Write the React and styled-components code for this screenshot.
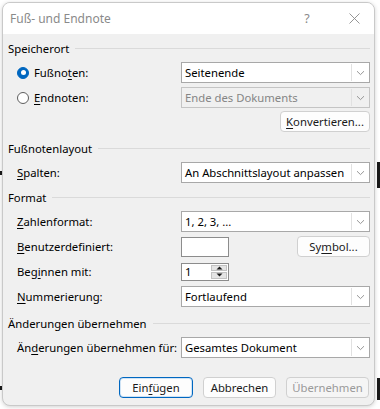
import React from 'react';
import styled, { createGlobalStyle } from 'styled-components';

const GlobalStyle = createGlobalStyle`
  html, body {
    margin: 0;
    padding: 0;
    background: #ffffff;
  }
  body {
    font-family: "Segoe UI", "Noto Sans", "Open Sans", sans-serif;
    font-size: 11.3px;
    color: #000;
  }
`;

const Page = styled.div`
  position: relative;
  width: 380px;
  height: 409px;
  overflow: hidden;
  padding: 2px 0 0 2px;
  box-sizing: border-box;
`;

const DocMark = styled.div`
  position: absolute;
  background: #1a1a1a;
`;

const Dialog = styled.div`
  position: relative;
  width: 373px;
  height: 404px;
  box-sizing: border-box;
  border: 1px solid #c9c9c9;
  border-radius: 8px;
  background: #f0f0f0;
  box-shadow: 0 1px 4px rgba(0, 0, 0, 0.18);
  overflow: hidden;
  display: flex;
  flex-direction: column;
`;

const TitleBar = styled.div`
  height: 31px;
  background: #ffffff;
  display: flex;
  align-items: center;
  gap: 7px;
  padding-left: 7px;
  color: #8a8a8a;
  font-size: 12px;
`;

const TitleText = styled.div`
  flex: 1;
`;

const TitleButton = styled.div`
  width: 40px;
  display: flex;
  justify-content: center;
  color: #8a8a8a;
  font-size: 12.5px;
`;

const Body = styled.div`
  flex: 1;
  display: flex;
  flex-direction: column;
  padding: 4px 4px 0 5px;
`;

const Heading = styled.div`
  height: 20px;
  display: flex;
  align-items: center;
  gap: 6px;
  margin-top: ${p => p.$mt || 0}px;
  &::after {
    content: '';
    flex: 1;
    border-top: 1px solid #dadada;
    margin-top: 1px;
  }
`;

const Row = styled.div`
  display: grid;
  grid-template-columns: 9px 164px 189px;
  align-items: center;
  height: 21px;
  margin-top: ${p => p.$mt ?? 4}px;
`;

const Label = styled.div`
  grid-column: 2;
  display: flex;
  align-items: center;
  white-space: nowrap;
  u {
    text-underline-offset: 2px;
  }
`;

const Radio = styled.span`
  width: 12px;
  height: 12px;
  box-sizing: border-box;
  border-radius: 50%;
  margin: 0 5px 0 0;
  background: ${p => (p.$checked ? '#0067c0' : '#fff')};
  border: 1px solid ${p => (p.$checked ? '#0067c0' : '#5e5e5e')};
  display: flex;
  align-items: center;
  justify-content: center;
  &::after {
    content: '';
    display: ${p => (p.$checked ? 'block' : 'none')};
    width: 5px;
    height: 5px;
    border-radius: 50%;
    background: #fff;
  }
`;

const Field = styled.div`
  grid-column: 3;
  display: flex;
  align-items: center;
  justify-content: ${p => p.$justify || 'flex-start'};
  height: 100%;
`;

const SelectBox = styled.div`
  width: 100%;
  height: 100%;
  box-sizing: border-box;
  display: flex;
  border: 1px solid ${p => (p.$disabled ? '#c4c4c4' : '#a8a8a8')};
  background: ${p => (p.$disabled ? '#f0f0f0' : '#ffffff')};
  color: ${p => (p.$disabled ? '#858585' : '#000')};
`;

const SelectValue = styled.div`
  flex: 1;
  display: flex;
  align-items: center;
  padding-left: 3px;
  white-space: nowrap;
  overflow: hidden;
`;

const SelectArrow = styled.div`
  width: 16px;
  display: flex;
  align-items: center;
  justify-content: center;
  border-left: 1px solid #e1e1e1;
  margin: 1px 1px 1px 0;
  background: ${p => (p.$disabled ? '#f0f0f0' : '#ffffff')};
`;

const Chevron = () => (
  <svg width="9" height="6" viewBox="0 0 9 6">
    <path d="M1 1.2 L4.5 4.6 L8 1.2" fill="none" stroke="#8a8a8a" strokeWidth="0.9" />
  </svg>
);

const CloseIcon = () => (
  <svg width="11" height="11" viewBox="0 0 11 11">
    <path d="M0.5 0.5 L10.5 10.5 M10.5 0.5 L0.5 10.5" stroke="#8a8a8a" strokeWidth="0.9" />
  </svg>
);

const Select = ({ value, disabled }) => (
  <SelectBox $disabled={disabled}>
    <SelectValue>{value}</SelectValue>
    <SelectArrow $disabled={disabled}>
      <Chevron />
    </SelectArrow>
  </SelectBox>
);

const TextInput = styled.div`
  width: 48px;
  height: 20px;
  box-sizing: border-box;
  border: 1px solid #8c8c8c;
  background: #fff;
`;

const Spinner = styled.div`
  width: 48px;
  height: 18px;
  box-sizing: border-box;
  border: 1px solid #8c8c8c;
  background: #fff;
  display: flex;
`;

const SpinValue = styled.div`
  flex: 1;
  display: flex;
  align-items: center;
  padding-left: 3px;
`;

const SpinButtons = styled.div`
  width: 16px;
  display: flex;
  flex-direction: column;
  gap: 1px;
  padding: 1px;
`;

const SpinButton = styled.div`
  flex: 1;
  background: #e4e4e4;
  border: 1px solid #c2c2c2;
  display: flex;
  align-items: center;
  justify-content: center;
`;

const Triangle = ({ down }) => (
  <svg width="7" height="4" viewBox="0 0 7 4">
    <path d={down ? 'M0.5 0.5 L6.5 0.5 L3.5 3.5 Z' : 'M0.5 3.5 L6.5 3.5 L3.5 0.5 Z'} fill="#1a1a1a" />
  </svg>
);

const Button = styled.div`
  width: ${p => p.$w}px;
  height: 21px;
  box-sizing: border-box;
  border-radius: 4px;
  border: 1px solid ${p => (p.$primary ? '#0067c0' : '#d0d0d0')};
  box-shadow: ${p => (p.$primary ? 'inset 0 0 0 1px #cfe3f5' : 'none')};
  background: ${p => (p.$disabled ? '#f5f5f5' : '#fdfdfd')};
  color: ${p => (p.$disabled ? '#9a9a9a' : '#1a1a1a')};
  display: flex;
  align-items: center;
  justify-content: center;
  white-space: nowrap;
  u {
    text-underline-offset: 2px;
  }
`;

const Footer = styled.div`
  display: flex;
  justify-content: flex-end;
  gap: 10px;
  margin-top: 19px;
  padding-right: 1px;
`;

export default function App() {
  return (
    <>
      <GlobalStyle />
      <Page>
        <DocMark style={{ left: 0, top: 171, width: 2, height: 4 }} />
        <DocMark style={{ left: 0, top: 386, width: 2, height: 4 }} />
        <DocMark style={{ left: 377, top: 162, width: 3, height: 26 }} />
        <DocMark style={{ left: 377, top: 378, width: 3, height: 22 }} />
        <Dialog>
          <TitleBar>
            <TitleText>Fuß- und Endnote</TitleText>
            <TitleButton>?</TitleButton>
            <TitleButton><CloseIcon /></TitleButton>
          </TitleBar>
          <Body>
            <Heading>Speicherort</Heading>
            <Row>
              <Label>
                <Radio $checked />
                <span>Fußno<u>t</u>en:</span>
              </Label>
              <Field><Select value="Seitenende" /></Field>
            </Row>
            <Row>
              <Label>
                <Radio />
                <span><u>E</u>ndnoten:</span>
              </Label>
              <Field><Select value="Ende des Dokuments" disabled /></Field>
            </Row>
            <Row $mt={3}>
              <Field $justify="flex-end">
                <Button $w={90}><span><u>K</u>onvertieren...</span></Button>
              </Field>
            </Row>

            <Heading $mt={6}>Fußnotenlayout</Heading>
            <Row>
              <Label><span><u>S</u>palten:</span></Label>
              <Field><Select value="An Abschnittslayout anpassen" /></Field>
            </Row>

            <Heading $mt={4}>Format</Heading>
            <Row>
              <Label><span><u>Z</u>ahlenformat:</span></Label>
              <Field><Select value="1, 2, 3, ..." /></Field>
            </Row>
            <Row>
              <Label><span><u>B</u>enutzerdefiniert:</span></Label>
              <Field $justify="space-between">
                <TextInput />
                <Button $w={73}><span>Sy<u>m</u>bol...</span></Button>
              </Field>
            </Row>
            <Row>
              <Label><span>Beg<u>i</u>nnen mit:</span></Label>
              <Field>
                <Spinner>
                  <SpinValue>1</SpinValue>
                  <SpinButtons>
                    <SpinButton><Triangle /></SpinButton>
                    <SpinButton><Triangle down /></SpinButton>
                  </SpinButtons>
                </Spinner>
              </Field>
            </Row>
            <Row>
              <Label><span><u>N</u>ummerierung:</span></Label>
              <Field><Select value="Fortlaufend" /></Field>
            </Row>

            <Heading $mt={6}>Änderungen übernehmen</Heading>
            <Row>
              <Label><span>Än<u>d</u>erungen übernehmen für:</span></Label>
              <Field><Select value="Gesamtes Dokument" /></Field>
            </Row>

            <Footer>
              <Button $w={74} $primary><span>Ein<u>f</u>ügen</span></Button>
              <Button $w={73}>Abbrechen</Button>
              <Button $w={83} $disabled>Übernehmen</Button>
            </Footer>
          </Body>
        </Dialog>
      </Page>
    </>
  );
}
